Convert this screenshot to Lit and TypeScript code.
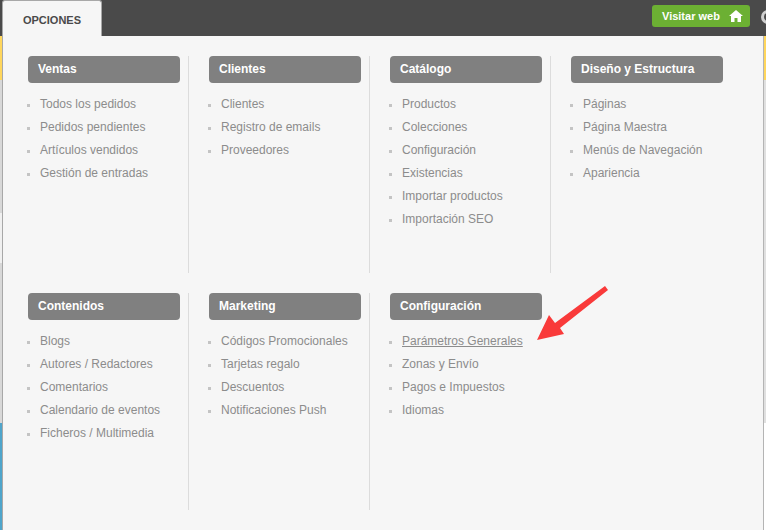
import { LitElement, html, css } from 'lit';
import { customElement } from 'lit/decorators.js';

interface MenuGroup {
  title: string;
  items: string[];
  link?: string;
}

const rowOne: MenuGroup[] = [
  { title: 'Ventas', items: ['Todos los pedidos', 'Pedidos pendientes', 'Artículos vendidos', 'Gestión de entradas'] },
  { title: 'Clientes', items: ['Clientes', 'Registro de emails', 'Proveedores'] },
  { title: 'Catálogo', items: ['Productos', 'Colecciones', 'Configuración', 'Existencias', 'Importar productos', 'Importación SEO'] },
  { title: 'Diseño y Estructura', items: ['Páginas', 'Página Maestra', 'Menús de Navegación', 'Apariencia'] },
];

const rowTwo: MenuGroup[] = [
  { title: 'Contenidos', items: ['Blogs', 'Autores / Redactores', 'Comentarios', 'Calendario de eventos', 'Ficheros / Multimedia'] },
  { title: 'Marketing', items: ['Códigos Promocionales', 'Tarjetas regalo', 'Descuentos', 'Notificaciones Push'] },
  { title: 'Configuración', link: 'Parámetros Generales', items: ['Parámetros Generales', 'Zonas y Envío', 'Pagos e Impuestos', 'Idiomas'] },
];

@customElement('app-root')
export class AppRoot extends LitElement {
  static styles = css`
    :host {
      display: block;
      width: 766px;
      height: 530px;
      overflow: hidden;
      position: relative;
      font-family: 'Liberation Sans', Arial, sans-serif;
    }
    .topbar {
      height: 36px;
      background: #4a4a4a;
      display: flex;
      justify-content: space-between;
      padding-left: 2px;
    }
    .tab {
      width: 100px;
      height: 36px;
      box-sizing: border-box;
      background: #f6f6f6;
      border: 1px solid #a8a8a8;
      border-bottom: 0;
      border-radius: 3px 3px 0 0;
      font-size: 11px;
      font-weight: 700;
      color: #4a4a4a;
      text-align: center;
      line-height: 38px;
    }
    .visit {
      margin: 5px 16px 0 0;
      width: 98px;
      height: 22px;
      box-sizing: border-box;
      background: #6cb033;
      border-radius: 3px;
      color: #fff;
      font-size: 11px;
      font-weight: 700;
      display: flex;
      align-items: center;
      gap: 9px;
      padding-left: 10px;
    }
    .gear {
      position: absolute;
      left: 761px;
      top: 10px;
      width: 14px;
      height: 14px;
      box-sizing: border-box;
      border: 3px solid #cfcfcf;
      border-radius: 50%;
    }
    .body {
      display: flex;
      height: 494px;
    }
    .side-left {
      width: 2px;
      background: linear-gradient(#ffd65c 0 44px, #d8d8d8 44px 177px, #f0f0f0 177px 227px, #d8d8d8 227px 387px, #4fa5cb 387px);
    }
    .side-right {
      flex: 1;
      background: linear-gradient(#ffd65c 0 44px, #e0e0e0 44px 387px, #fff 387px);
    }
    .panel {
      width: 762px;
      height: 494px;
      background: #f6f6f6;
      box-sizing: border-box;
      border-left: 1px solid #a8a8a8;
      border-right: 1px solid #b4b4b4;
      padding: 20px 0 0 25px;
    }
    .row {
      display: flex;
      height: 237px;
    }
    .group {
      width: 181px;
      height: 217px;
      position: relative;
    }
    .group.divided::after {
      content: '';
      position: absolute;
      left: 160px;
      top: 0;
      bottom: 0;
      width: 1px;
      background: #dcdcdc;
    }
    .title {
      width: 152px;
      height: 27px;
      box-sizing: border-box;
      background: #808080;
      border-radius: 4px;
      color: #fff;
      font-size: 12px;
      font-weight: 700;
      line-height: 26px;
      padding-left: 10px;
    }
    ul {
      list-style: none;
      margin: 10px 0 0;
      padding: 0;
    }
    li {
      height: 23px;
      line-height: 23px;
      font-size: 12px;
      color: #8c8c8c;
      padding-left: 12px;
      position: relative;
    }
    li::before {
      content: '';
      position: absolute;
      left: -1px;
      top: 11px;
      width: 3px;
      height: 3px;
      background: #c4c4c4;
    }
    .active {
      text-decoration: underline;
    }
    .arrow {
      position: absolute;
      left: 530px;
      top: 280px;
    }
  `;

  private renderGroup(group: MenuGroup, divided: boolean) {
    return html`
      <section class="group ${divided ? 'divided' : ''}">
        <div class="title">${group.title}</div>
        <ul>
          ${group.items.map(item => html`<li><span class=${item === group.link ? 'active' : ''}>${item}</span></li>`)}
        </ul>
      </section>
    `;
  }

  render() {
    return html`
      <div class="topbar">
        <div class="tab">OPCIONES</div>
        <div class="visit">
          Visitar web
          <svg width="14" height="12" viewBox="0 0 14 12"><path fill="#fff" d="M7 0 14 6H12V12H8.5V8H5.5V12H2V6H0Z"/></svg>
        </div>
      </div>
      <div class="gear"></div>
      <div class="body">
        <div class="side-left"></div>
        <div class="panel">
          <div class="row">${rowOne.map((g, i) => this.renderGroup(g, i < 3))}</div>
          <div class="row">${rowTwo.map((g, i) => this.renderGroup(g, i < 2))}</div>
        </div>
        <div class="side-right"></div>
      </div>
      <svg class="arrow" width="84" height="70" viewBox="0 0 84 70">
        <path fill="#f93a3a" d="M75 6 78 10 30 48 34 54 7 60 19 35 25 43Z"/>
      </svg>
    `;
  }
}
